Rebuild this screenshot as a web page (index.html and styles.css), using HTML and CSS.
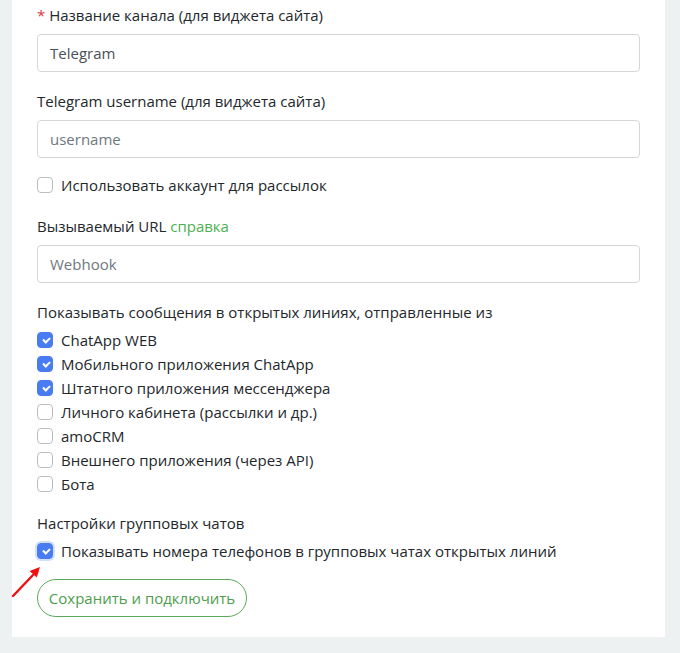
FILE: index.html
```html
<!DOCTYPE html>
<html lang="ru">
<head>
<meta charset="utf-8">
<link rel="stylesheet" href="styles.css">
</head>
<body>
<div class="card">
  <form class="form">
    <div class="group">
      <label class="label"><span class="req">*</span> Название канала (для виджета сайта)</label>
      <div class="input value">Telegram</div>
    </div>
    <div class="group">
      <label class="label">Telegram username (для виджета сайта)</label>
      <div class="input placeholder">username</div>
    </div>
    <div class="check-row single">
      <span class="box"></span><span>Использовать аккаунт для рассылок</span>
    </div>
    <div class="group">
      <label class="label">Вызываемый URL <a class="link">справка</a></label>
      <div class="input placeholder">Webhook</div>
    </div>
    <div class="group">
      <label class="label list-label">Показывать сообщения в открытых линиях, отправленные из</label>
      <div class="check-list">
        <div class="check-row"><span class="box on"></span><span>ChatApp WEB</span></div>
        <div class="check-row"><span class="box on"></span><span>Мобильного приложения ChatApp</span></div>
        <div class="check-row"><span class="box on"></span><span>Штатного приложения мессенджера</span></div>
        <div class="check-row"><span class="box"></span><span>Личного кабинета (рассылки и др.)</span></div>
        <div class="check-row"><span class="box"></span><span>amoCRM</span></div>
        <div class="check-row"><span class="box"></span><span>Внешнего приложения (через API)</span></div>
        <div class="check-row"><span class="box"></span><span>Бота</span></div>
      </div>
    </div>
    <div class="group">
      <label class="label list-label">Настройки групповых чатов</label>
      <div class="check-row focus-wrap">
        <span class="box on focus"></span><span>Показывать номера телефонов в групповых чатах открытых линий</span>
        <svg class="arrow" width="32" height="34" viewBox="0 0 32 34">
          <line x1="2" y1="31" x2="22" y2="10" stroke="#f01010" stroke-width="2.4" stroke-linecap="round"/>
          <polygon points="29,2 25.8,12.6 18.6,6" fill="#f01010"/>
        </svg>
      </div>
    </div>
    <button type="button" class="btn">Сохранить и подключить</button>
  </form>
</div>
</body>
</html>
```
FILE: styles.css
```css
html, body {
  margin: 0;
  padding: 0;
}
body {
  background: #edf1f2;
  font-family: "Open Sans", "Noto Sans", sans-serif;
  font-size: 15px;
  color: #23272b;
  width: 680px;
  height: 653px;
  overflow: hidden;
}
.card {
  background: #fff;
  margin: 0 15px 0 12px;
  height: 637px;
  box-sizing: border-box;
  padding: 4px 25px 0 25px;
}
.form {
  display: flex;
  flex-direction: column;
}
.group {
  display: flex;
  flex-direction: column;
}
.label {
  line-height: 22px;
  margin-bottom: 8px;
}
.req {
  color: #dc3545;
}
.link {
  color: #4caf50;
}
.input {
  height: 38px;
  box-sizing: border-box;
  border: 1px solid #d3d7da;
  border-radius: 4px;
  padding: 0 12px;
  display: flex;
  align-items: center;
  margin-bottom: 18px;
}
.value { color: #495057; }
.placeholder { color: #6f777e; }
.check-row {
  display: flex;
  align-items: center;
  gap: 8px;
  height: 24px;
  position: relative;
}
.check-row.single {
  margin-top: -3px;
  margin-bottom: 18px;
}
.list-label {
  margin-bottom: 5px;
}
.check-list {
  display: flex;
  flex-direction: column;
  margin-bottom: 16px;
}
.box {
  width: 16px;
  height: 16px;
  box-sizing: border-box;
  border: 1px solid #b9bec3;
  border-radius: 4px;
  flex: none;
  position: relative;
  background: #fff;
}
.box.on {
  background: #4a7cf1;
  border-color: #4a7cf1;
}
.box.on::after {
  content: "";
  position: absolute;
  left: 4.5px;
  top: 3.5px;
  width: 5px;
  height: 3px;
  border-left: 2px solid #fff;
  border-bottom: 2px solid #fff;
  transform: rotate(-45deg);
}
.box.focus {
  box-shadow: 0 0 0 2px #d3e0fb;
}
.arrow {
  position: absolute;
  left: -26px;
  top: 26px;
}
.btn {
  align-self: flex-start;
  margin-top: 16px;
  height: 38px;
  width: 210px;
  border: 1px solid #5aa85a;
  border-radius: 19px;
  background: #fff;
  color: #4d9e4d;
  font-family: inherit;
  font-size: 15px;
  padding: 0;
}
```
